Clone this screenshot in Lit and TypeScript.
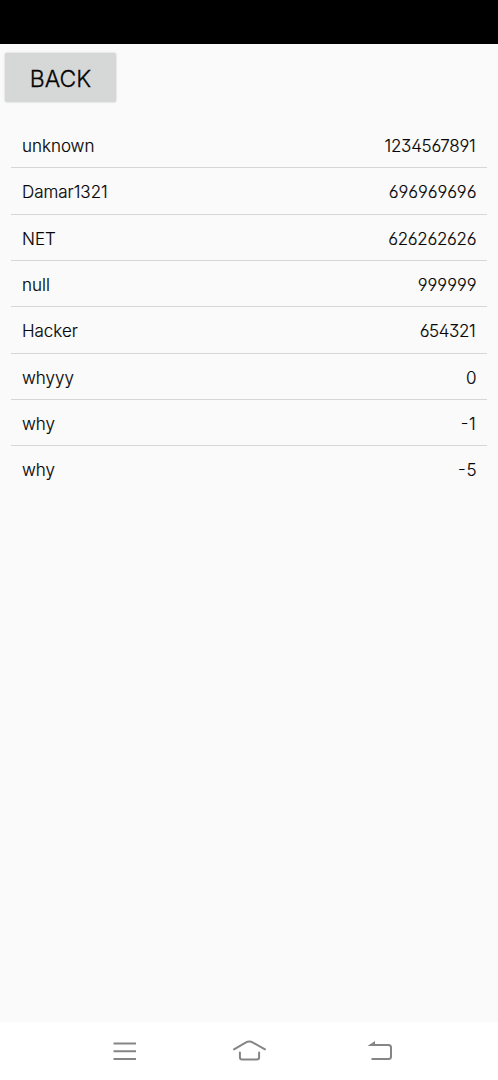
import { LitElement, html, css } from "lit";
import { customElement } from "lit/decorators.js";
import { styleMap } from "lit/directives/style-map.js";

interface Entry {
  name: string;
  score: string;
  /** Letter spacing of the score, in px. */
  tracking: number;
}

const ENTRIES: Entry[] = [
  { name: "unknown", score: "1234567891", tracking: -0.25 },
  { name: "Damar1321", score: "696969696", tracking: 0.4 },
  { name: "NET", score: "626262626", tracking: -0.3 },
  { name: "null", score: "999999", tracking: 0 },
  { name: "Hacker", score: "654321", tracking: -0.4 },
  { name: "whyyy", score: "0", tracking: 0 },
  { name: "why", score: "-1", tracking: 0.5 },
  { name: "why", score: "-5", tracking: 0.7 },
];

@customElement("score-list")
export class ScoreList extends LitElement {
  static styles = css`
    :host {
      display: block;
      padding: 0 11px;
    }
    .row {
      box-sizing: border-box;
      height: 46.34px;
      padding: 2.7px 11px 0 11px;
      display: flex;
      align-items: center;
      justify-content: space-between;
      border-bottom: 1px solid #d6d6d6;
      font-size: 17px;
      line-height: 24px;
      color: #050505;
      -webkit-text-stroke: 0.15px #050505;
    }
    .row:last-child {
      border-bottom-color: transparent;
    }
    .name {
      letter-spacing: -0.03px;
    }
    .score {
      font-feature-settings: "ss01", "cv03", "cv04", "case", "calt" 0;
    }
  `;

  render() {
    return html`${ENTRIES.map((e) => {
      const end = e.score.endsWith("1") ? 0.8 : 0;
      const spacing = styleMap({
        letterSpacing: `${e.tracking}px`,
        marginRight: `${(end - e.tracking - 0.5).toFixed(2)}px`,
      });
      return html`<div class="row"><span class="name">${e.name}</span><span class="score" style=${spacing}>${e.score}</span></div>`;
    })}`;
  }
}

@customElement("app-root")
export class AppRoot extends LitElement {
  static styles = css`
    :host {
      display: flex;
      flex-direction: column;
      height: 1080px;
      background: #fafafa;
      font-family: Inter, Roboto, sans-serif;
      font-weight: 300;
      overflow: hidden;
    }
    .status {
      height: 44px;
      background: #000;
      flex: none;
    }
    .top {
      padding: 9px 5px 0;
      height: 69px;
      flex: none;
    }
    .back {
      display: flex;
      align-items: center;
      justify-content: center;
      width: 111px;
      height: 49px;
      padding: 2px 0 0;
      box-sizing: border-box;
      border: 0;
      border-radius: 2px;
      background: #d6d7d7;
      box-shadow: 0 0 2px rgba(0, 0, 0, 0.24);
      font: inherit;
      font-size: 23px;
      color: #050505;
      -webkit-text-stroke: 0.3px #050505;
    }
    .content {
      flex: 1;
    }
    .nav {
      height: 58px;
      flex: none;
      background: #fff;
    }
    .nav svg {
      display: block;
    }
  `;

  render() {
    return html`
      <div class="status"></div>
      <div class="top"><button class="back">BACK</button></div>
      <score-list class="content"></score-list>
      <div class="nav">
        <svg width="498" height="58" viewBox="0 1022 498 58" fill="none" stroke="#858585" stroke-width="2">
          <path d="M113.5 1043.5H136M113.5 1051.2H136M113.5 1059H136" />
          <path d="M234 1049.3L245.6 1042.6Q249.3 1040.6 253 1042.6L265 1049.3" stroke-linecap="round" />
          <path d="M239.9 1052.6V1057.2Q239.9 1059.5 242.2 1059.5H256.8Q259.1 1059.5 259.1 1057.2V1052.6" stroke-linecap="round" />
          <path d="M370 1045H388.5Q391 1045 391 1047.5V1056.5Q391 1059 388.5 1059H371.5" />
          <path d="M367.5 1046L375 1041V1046Z" fill="#858585" stroke="none" />
        </svg>
      </div>
    `;
  }
}
